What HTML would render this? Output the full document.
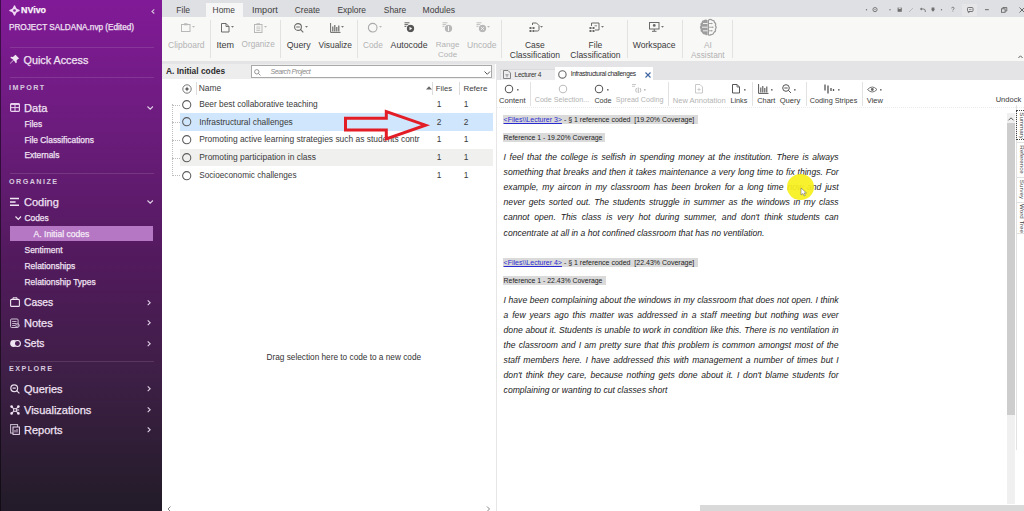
<!DOCTYPE html>
<html><head><meta charset="utf-8">
<style>
*{margin:0;padding:0;box-sizing:border-box}
html,body{width:1024px;height:511px;overflow:hidden;background:#fff;font-family:"Liberation Sans",sans-serif;color:#333}
.a{position:absolute;white-space:nowrap}
#sb{position:absolute;left:0;top:0;width:162px;height:511px;background:linear-gradient(180deg,#811a97 0px,#6b1c7c 130px,#531a5e 255px,#3d1f45 380px,#251c2b 495px,#241b2a 511px);color:#f1e8f3}
.hr{position:absolute;left:10px;width:144px;height:1px;background:rgba(255,255,255,0.12)}
.sbt{color:#f0e2f3;-webkit-text-stroke:0.25px #f0e2f3}
.cap{font-weight:bold;letter-spacing:1.45px;color:#d8cadf}
.dis{color:#b0b0b0}
.sep{position:absolute;width:1px;background:#dcdcdc}
.rl{color:#3a3a3a}
svg{position:absolute;overflow:visible}
</style></head><body>

<div id="sb">
<svg style="left:9px;top:4.7px" width="11" height="11" viewBox="0 0 11 11"><path d="M5.5 0.2 Q6.3 0.2 6.8 2.2 Q7.3 3.7 8.8 4.2 Q10.8 4.7 10.8 5.5 Q10.8 6.3 8.8 6.8 Q7.3 7.3 6.8 8.8 Q6.3 10.8 5.5 10.8 Q4.7 10.8 4.2 8.8 Q3.7 7.3 2.2 6.8 Q0.2 6.3 0.2 5.5 Q0.2 4.7 2.2 4.2 Q3.7 3.7 4.2 2.2 Q4.7 0.2 5.5 0.2Z" fill="#efd9f4"/><circle cx="5.5" cy="5.5" r="1.3" fill="#811a97"/></svg>
<div class="a sbt" style="left:21px;top:4.0px;font-size:8.9px;line-height:12px;font-weight:bold;color:#fff">NVivo</div>
<svg style="left:150.5px;top:8.5px" width="4" height="5"><path d="M3.3 0.3 L1 2.4 L3.3 4.5" stroke="#d9c4df" stroke-width="1.1" fill="none"/></svg>
<div class="a sbt" style="left:9px;top:21.5px;font-size:8.2px;line-height:11px;">PROJECT SALDANA.nvp (Edited)</div>
<div class="hr" style="top:47px"></div>
<svg style="left:9px;top:54px" width="11" height="11" viewBox="0 0 11 11"><path d="M6.5 0.8 L10.2 4.5 L9 5 L7.6 6.6 L7.8 8.6 L6.8 9.2 L4.8 6.2 L1.2 9.8 L0.8 9.4 L4.4 5.8 L1.4 3.8 L2 2.8 L4 3 L5.6 1.6 Z" fill="#f0e6f3"/></svg>
<div class="a sbt" style="left:23.5px;top:53.0px;font-size:10.8px;line-height:14px;">Quick Access</div>
<div class="hr" style="top:77px"></div>
<div class="a cap" style="left:9px;top:82.5px;font-size:7.2px;line-height:9px;">IMPORT</div>
<svg style="left:10px;top:103px" width="10" height="9" viewBox="0 0 10 9"><rect x="0.6" y="0.6" width="8.8" height="7.8" rx="1" stroke="#e9d3ee" stroke-width="1.2" fill="none"/><path d="M0.6 1.3 H9.4" stroke="#e9d3ee" stroke-width="1.3"/><path d="M0.6 4.6 H9.4 M5 1.5 V8.4" stroke="#e9d3ee" stroke-width="1"/></svg>
<div class="a sbt" style="left:24px;top:100.6px;font-size:11.1px;line-height:14px;">Data</div>
<svg style="left:147px;top:106px" width="6.5" height="4"><path d="M0.5 0.5 L3.2 3.2 L5.9 0.5" stroke="#e0d0e6" stroke-width="1.1" fill="none"/></svg>
<div class="a sbt" style="left:24.5px;top:118.5px;font-size:8.4px;line-height:11px;">Files</div>
<div class="a sbt" style="left:24.5px;top:134.5px;font-size:8.4px;line-height:11px;">File Classifications</div>
<div class="a sbt" style="left:24.5px;top:150.0px;font-size:8.4px;line-height:11px;">Externals</div>
<div class="hr" style="top:173px"></div>
<div class="a cap" style="left:9px;top:176.5px;font-size:7.2px;line-height:9px;">ORGANIZE</div>
<svg style="left:10px;top:197px" width="10" height="10" viewBox="0 0 10 10"><path d="M0 1.5 H9 M0 5 H5.6 M0 8.3 H9" stroke="#f0e6f3" stroke-width="1.4"/></svg>
<div class="a sbt" style="left:24px;top:195.0px;font-size:11.0px;line-height:14px;">Coding</div>
<svg style="left:147px;top:200px" width="6.5" height="4"><path d="M0.5 0.5 L3.2 3.2 L5.9 0.5" stroke="#e0d0e6" stroke-width="1.1" fill="none"/></svg>
<svg style="left:15px;top:216px" width="7" height="5"><path d="M0.5 0.5 L3.3 3.3 L6 0.5" stroke="#f0e6f3" stroke-width="1.2" fill="none"/></svg>
<div class="a sbt" style="left:24.5px;top:212.5px;font-size:8.4px;line-height:11px;">Codes</div>
<div style="position:absolute;left:10px;top:225.9px;width:142.8px;height:14.7px;background:#b577c3"></div>
<div class="a sbt" style="left:33.5px;top:228.5px;font-size:8.6px;line-height:11px;color:#fbf4fc">A. Initial codes</div>
<div class="a sbt" style="left:24.5px;top:244.5px;font-size:8.45px;line-height:11px;">Sentiment</div>
<div class="a sbt" style="left:24.5px;top:260.5px;font-size:8.45px;line-height:11px;">Relationships</div>
<div class="a sbt" style="left:24.5px;top:276.5px;font-size:8.45px;line-height:11px;">Relationship Types</div>
<svg style="left:10px;top:297px" width="10" height="10" viewBox="0 0 10 10"><rect x="0.6" y="2.4" width="8.8" height="7" rx="1" stroke="#f0e6f3" stroke-width="1.1" fill="none"/><path d="M3 2.4 V0.8 H7 V2.4" stroke="#f0e6f3" stroke-width="1" fill="none"/></svg>
<div class="a sbt" style="left:24px;top:296.1px;font-size:10.3px;line-height:13px;">Cases</div>
<svg style="left:10px;top:318px" width="10" height="10" viewBox="0 0 10 10"><rect x="0.6" y="1" width="7.5" height="8.5" rx="1" stroke="#cfc2d6" stroke-width="1" fill="none"/><path d="M2.2 3.5 H6.5 M2.2 5.5 H6.5 M2.2 7.5 H5" stroke="#cfc2d6" stroke-width="0.9"/><circle cx="7.5" cy="7.5" r="1.8" stroke="#cfc2d6" stroke-width="0.9" fill="none"/></svg>
<div class="a sbt" style="left:24px;top:316.0px;font-size:11.0px;line-height:14px;">Notes</div>
<svg style="left:9.5px;top:339px" width="11" height="9" viewBox="0 0 11 9"><circle cx="3.6" cy="4.5" r="3.4" fill="#f0e6f3"/><circle cx="7.4" cy="4.5" r="3" stroke="#f0e6f3" stroke-width="1.1" fill="#4b1c55"/></svg>
<div class="a sbt" style="left:24px;top:336.9px;font-size:10.2px;line-height:13px;">Sets</div>
<svg style="left:147px;top:299.8px" width="4.5" height="5.5"><path d="M0.7 0.4 L3.2 2.75 L0.7 5.1" stroke="#e0d0e6" stroke-width="1.05" fill="none"/></svg>
<svg style="left:147px;top:320.2px" width="4.5" height="5.5"><path d="M0.7 0.4 L3.2 2.75 L0.7 5.1" stroke="#e0d0e6" stroke-width="1.05" fill="none"/></svg>
<svg style="left:147px;top:340.59999999999997px" width="4.5" height="5.5"><path d="M0.7 0.4 L3.2 2.75 L0.7 5.1" stroke="#e0d0e6" stroke-width="1.05" fill="none"/></svg>
<svg style="left:147px;top:386.4px" width="4.5" height="5.5"><path d="M0.7 0.4 L3.2 2.75 L0.7 5.1" stroke="#e0d0e6" stroke-width="1.05" fill="none"/></svg>
<svg style="left:147px;top:406.7px" width="4.5" height="5.5"><path d="M0.7 0.4 L3.2 2.75 L0.7 5.1" stroke="#e0d0e6" stroke-width="1.05" fill="none"/></svg>
<svg style="left:147px;top:426.9px" width="4.5" height="5.5"><path d="M0.7 0.4 L3.2 2.75 L0.7 5.1" stroke="#e0d0e6" stroke-width="1.05" fill="none"/></svg>
<div class="hr" style="top:361px"></div>
<div class="a cap" style="left:9px;top:364.0px;font-size:7.2px;line-height:9px;">EXPLORE</div>
<svg style="left:10px;top:384px" width="10" height="10" viewBox="0 0 10 10"><circle cx="4.2" cy="4.2" r="3.4" stroke="#e6dbe9" stroke-width="1.2" fill="none"/><path d="M6.6 6.6 L9.4 9.4 M2.6 4.2 H5.8" stroke="#e6dbe9" stroke-width="1.2"/></svg>
<div class="a sbt" style="left:24px;top:382.2px;font-size:11.0px;line-height:14px;">Queries</div>
<svg style="left:10px;top:405px" width="10" height="10" viewBox="0 0 10 10"><path d="M1.6 1.6 L3.8 3.8 M8.4 1.6 L6.2 3.8 M1.6 8.4 L3.8 6.2 M8.4 8.4 L6.2 6.2 M6.4 5 H9.2" stroke="#efe3f3" stroke-width="1.1"/><circle cx="1.6" cy="1.6" r="1.3" fill="#efe3f3"/><circle cx="8.4" cy="1.6" r="1.3" fill="#efe3f3"/><circle cx="1.6" cy="8.4" r="1.3" fill="#efe3f3"/><circle cx="8.4" cy="8.4" r="1.3" fill="#efe3f3"/><circle cx="5" cy="5" r="1.5" stroke="#efe3f3" stroke-width="1" fill="none"/></svg>
<div class="a sbt" style="left:24px;top:402.5px;font-size:11.05px;line-height:14px;">Visualizations</div>
<svg style="left:10px;top:424px" width="10" height="11" viewBox="0 0 10 11"><rect x="0.6" y="0.6" width="7" height="8.5" stroke="#cfc2d6" stroke-width="1" fill="none"/><rect x="3" y="3" width="6.4" height="7.4" stroke="#e6dbe9" stroke-width="1" fill="#3a1e42"/><path d="M5 6 V8.5 M7 5 V8.5" stroke="#e6dbe9" stroke-width="0.9"/></svg>
<div class="a sbt" style="left:24px;top:422.7px;font-size:11.0px;line-height:14px;">Reports</div>
<div style="position:absolute;left:0;top:0;width:1px;height:511px;background:rgba(0,0,0,0.5)"></div>
</div>
<div style="position:absolute;left:162px;top:0;width:862px;height:17px;background:#dfe0e3"></div>
<div style="position:absolute;left:205.5px;top:3px;width:37.5px;height:14px;background:#f6f6f6"></div>
<div class="a " style="left:176.3px;top:4.5px;font-size:8.5px;line-height:11px;color:#3e3e3e">File</div>
<div class="a " style="left:212.6px;top:4.5px;font-size:8.4px;line-height:11px;color:#3e3e3e">Home</div>
<div class="a " style="left:252px;top:4.0px;font-size:9.1px;line-height:12px;color:#3e3e3e">Import</div>
<div class="a " style="left:294.8px;top:4.5px;font-size:8.4px;line-height:11px;color:#3e3e3e">Create</div>
<div class="a " style="left:337.4px;top:4.5px;font-size:8.44px;line-height:11px;color:#3e3e3e">Explore</div>
<div class="a " style="left:383.8px;top:4.5px;font-size:8.4px;line-height:11px;color:#3e3e3e">Share</div>
<div class="a " style="left:422.5px;top:4.5px;font-size:8.6px;line-height:11px;color:#3e3e3e">Modules</div>
<svg style="left:864px;top:7px" width="160" height="7"><circle cx="2.5" cy="2.8" r="0.7" fill="#707070"/><circle cx="11" cy="2.6" r="2.1" stroke="#707070" stroke-width="0.9" fill="none"/><circle cx="11" cy="2.6" r="0.7" fill="#707070"/><circle cx="26" cy="2.8" r="0.7" fill="#707070"/><rect x="33.6" y="0.6" width="4.2" height="4.2" fill="#707070"/><rect x="34.6" y="0.6" width="2.2" height="1.3" fill="#dfe0e3"/><path d="M45 5 L49 1" stroke="#b0b0b0" stroke-width="0.8"/><path d="M57 2 H59.5 Q61.3 2 61.3 4 V5" stroke="#707070" stroke-width="0.9" fill="none"/><path d="M55.8 2 L57.8 0.4 V3.6Z" fill="#707070"/><path d="M67.6 0.6 H70.4 V2.5 H67.6Z M67 2.5 H71 L69 4.8Z" fill="#707070"/><circle cx="77.5" cy="2.8" r="0.7" fill="#707070"/><path d="M87.6 1.3 Q87.6 0.2 88.9 0.2 Q90.1 0.2 90.1 1.3 Q90.1 2.2 88.9 2.7 V3.4" stroke="#707070" stroke-width="0.8" fill="none"/><circle cx="88.9" cy="4.6" r="0.45" fill="#707070"/></svg>
<div style="position:absolute;left:961.7px;top:3.7px;width:15.5px;height:12.5px;background:#e6e6e8"></div>
<svg style="left:966.8px;top:6.5px" width="7" height="6"><rect x="0.5" y="0.5" width="5.5" height="4" rx="0.8" stroke="#666" stroke-width="0.9" fill="none"/><path d="M1.5 4.5 L1.3 5.8 L3 4.5" stroke="#666" stroke-width="0.7" fill="none"/><path d="M2 2.5 H4.5" stroke="#666" stroke-width="0.6"/></svg>
<svg style="left:985px;top:9px" width="4" height="1.5"><path d="M0 0.7 H3.8" stroke="#6a6a6a" stroke-width="1"/></svg>
<svg style="left:1001px;top:6.8px" width="6.5" height="5.8"><rect x="0.5" y="1.8" width="3.6" height="3.5" stroke="#6a6a6a" stroke-width="0.9" fill="none"/><path d="M1.8 1.8 V0.5 H5.8 V4 H4.1" stroke="#6a6a6a" stroke-width="0.9" fill="none"/></svg>
<svg style="left:1018.5px;top:6.8px" width="6" height="6"><path d="M0.5 0.5 L5.5 5.5 M5.5 0.5 L0.5 5.5" stroke="#6a6a6a" stroke-width="1"/></svg>
<div style="position:absolute;left:162px;top:17px;width:862px;height:44px;background:#f8f8f7"></div>
<div class="sep" style="left:209.8px;top:20px;height:38px;background:#e2e2e2"></div>
<div class="sep" style="left:280.3px;top:20px;height:38px;background:#e2e2e2"></div>
<div class="sep" style="left:356.5px;top:20px;height:38px;background:#e2e2e2"></div>
<div class="sep" style="left:501.2px;top:20px;height:38px;background:#e2e2e2"></div>
<div class="sep" style="left:626.8px;top:20px;height:38px;background:#e2e2e2"></div>
<div class="sep" style="left:682.3px;top:20px;height:38px;background:#e2e2e2"></div>
<div class="sep" style="left:731.6px;top:20px;height:38px;background:#e2e2e2"></div>
<div class="a" style="left:148px;width:76.6px;text-align:center;top:38.5px;font-size:8.55px;line-height:12px;color:#b3b3b3">Clipboard</div>
<div class="a" style="left:196.4px;width:57.599999999999994px;text-align:center;top:38.5px;font-size:9.0px;line-height:12px;color:#3b3b3b">Item</div>
<div class="a" style="left:221.5px;width:73.30000000000001px;text-align:center;top:38.5px;font-size:8.2px;line-height:12px;color:#b3b3b3">Organize</div>
<div class="a" style="left:266.7px;width:63.900000000000034px;text-align:center;top:38.5px;font-size:8.8px;line-height:12px;color:#3b3b3b">Query</div>
<div class="a" style="left:298.5px;width:73.39999999999998px;text-align:center;top:38.5px;font-size:8.4px;line-height:12px;color:#3b3b3b">Visualize</div>
<div class="a" style="left:343px;width:59.80000000000001px;text-align:center;top:38.5px;font-size:8.3px;line-height:12px;color:#b3b3b3">Code</div>
<div class="a" style="left:370.6px;width:77.0px;text-align:center;top:38.5px;font-size:8.76px;line-height:12px;color:#3b3b3b">Autocode</div>
<div class="a" style="left:416.3px;width:62.69999999999999px;text-align:center;top:38.5px;font-size:8.0px;line-height:12px;color:#b3b3b3">Range</div>
<div class="a" style="left:416.3px;width:62.69999999999999px;text-align:center;top:48.5px;font-size:8.0px;line-height:12px;color:#b3b3b3">Code</div>
<div class="a" style="left:447px;width:69.5px;text-align:center;top:38.5px;font-size:8.56px;line-height:12px;color:#b3b3b3">Uncode</div>
<div class="a" style="left:489.8px;width:90.19999999999999px;text-align:center;top:38.5px;font-size:8.5px;line-height:12px;color:#3b3b3b">Case</div>
<div class="a" style="left:489.8px;width:90.19999999999999px;text-align:center;top:48.5px;font-size:8.52px;line-height:12px;color:#3b3b3b">Classification</div>
<div class="a" style="left:550.4px;width:90.10000000000002px;text-align:center;top:38.5px;font-size:8.5px;line-height:12px;color:#3b3b3b">File</div>
<div class="a" style="left:550.4px;width:90.10000000000002px;text-align:center;top:48.5px;font-size:8.52px;line-height:12px;color:#3b3b3b">Classification</div>
<div class="a" style="left:612px;width:84.29999999999995px;text-align:center;top:38.5px;font-size:8.6px;line-height:12px;color:#3b3b3b">Workspace</div>
<div class="a" style="left:671px;width:73.70000000000005px;text-align:center;top:38.5px;font-size:8.3px;line-height:12px;color:#b3b3b3">AI</div>
<div class="a" style="left:671px;width:73.70000000000005px;text-align:center;top:48.5px;font-size:8.3px;line-height:12px;color:#b3b3b3">Assistant</div>
<svg style="left:181px;top:22.5px" width="10" height="9"><rect x="0.5" y="1.5" width="8.5" height="7" stroke="#b8b8b8" stroke-width="1" fill="none"/><rect x="3" y="0.3" width="3.5" height="2" fill="#b8b8b8"/></svg>
<svg style="left:191.5px;top:25.5px" width="3" height="2"><path d="M0 0 H3 L1.5 1.8Z" fill="#b8b8b8"/></svg>
<svg style="left:220.5px;top:22.5px" width="9" height="10"><path d="M0.5 0.5 H5 L8 3.5 V9 H0.5Z" stroke="#6a6a6a" stroke-width="1" fill="none"/><path d="M5 0.5 V3.5 H8" stroke="#6a6a6a" stroke-width="0.9" fill="none"/></svg>
<svg style="left:231.2px;top:25.5px" width="3" height="2"><path d="M0 0 H3 L1.5 1.8Z" fill="#777"/></svg>
<svg style="left:254px;top:22.5px" width="9" height="10"><rect x="0.5" y="1.5" width="7.5" height="8" stroke="#b8b8b8" stroke-width="1" fill="none"/><path d="M2.3 4 H6.3 M2.3 5.8 H6.3 M2.3 7.6 H6.3" stroke="#b8b8b8" stroke-width="0.8"/><rect x="2.5" y="0.3" width="3.5" height="1.8" fill="#b8b8b8"/></svg>
<svg style="left:264.0px;top:25.5px" width="3" height="2"><path d="M0 0 H3 L1.5 1.8Z" fill="#b8b8b8"/></svg>
<svg style="left:293.5px;top:22.5px" width="10" height="10"><circle cx="4" cy="4" r="3.4" stroke="#6a6a6a" stroke-width="1.1" fill="none"/><path d="M6.4 6.4 L9.3 9.3 M2.2 4 H5.8" stroke="#6a6a6a" stroke-width="1.1"/></svg>
<svg style="left:305.0px;top:25.5px" width="3" height="2"><path d="M0 0 H3 L1.5 1.8Z" fill="#777"/></svg>
<svg style="left:329.5px;top:22.5px" width="11" height="10"><path d="M0.6 0 V9.4 H10.5" stroke="#6a6a6a" stroke-width="1" fill="none"/><path d="M2.8 3.5 V8.5 M4.8 2 V8.5 M6.8 4 V8.5 M8.8 2.5 V8.5" stroke="#6a6a6a" stroke-width="1.2"/></svg>
<svg style="left:341.2px;top:25.5px" width="3" height="2"><path d="M0 0 H3 L1.5 1.8Z" fill="#777"/></svg>
<svg style="left:367.5px;top:22.5px" width="10" height="10"><circle cx="4.7" cy="4.7" r="4.3" stroke="#aaa" stroke-width="1.1" fill="none"/></svg>
<svg style="left:379.0px;top:25.5px" width="3" height="2"><path d="M0 0 H3 L1.5 1.8Z" fill="#b8b8b8"/></svg>
<svg style="left:404px;top:21.5px" width="11" height="11"><path d="M0.5 0.8 H5.5 M0.5 2.6 H4.5 M0.5 4.4 H3" stroke="#555" stroke-width="0.9"/><circle cx="6.5" cy="6.5" r="3.7" fill="#555"/><circle cx="6.5" cy="6.5" r="4.4" fill="none" stroke="#f8f8f7" stroke-width="0.8"/><path d="M5.5 4.7 L8.2 6.5 L5.5 8.3Z" fill="#f8f8f7"/></svg>
<svg style="left:442px;top:21.5px" width="11" height="11"><path d="M0.5 0.8 H5.5 M0.5 2.6 H4.5 M0.5 4.4 H3" stroke="#b8b8b8" stroke-width="0.9"/><circle cx="6.5" cy="6.5" r="3.7" fill="#b8b8b8"/><circle cx="6.5" cy="6.5" r="4.4" fill="none" stroke="#f8f8f7" stroke-width="0.8"/><rect x="6" y="4" width="1" height="5" fill="#f8f8f7"/></svg>
<svg style="left:476px;top:21.5px" width="11" height="11"><path d="M0.5 0.8 H5.5 M0.5 2.6 H4.5 M0.5 4.4 H3" stroke="#b8b8b8" stroke-width="0.9"/><circle cx="6.5" cy="6.5" r="3.7" fill="#b8b8b8"/><circle cx="6.5" cy="6.5" r="4.4" fill="none" stroke="#f8f8f7" stroke-width="0.8"/><path d="M5.2 5.2 L7.8 7.8 M7.8 5.2 L5.2 7.8" stroke="#f8f8f7" stroke-width="0.9"/></svg>
<svg style="left:487.1px;top:25.5px" width="3" height="2"><path d="M0 0 H3 L1.5 1.8Z" fill="#b8b8b8"/></svg>
<svg style="left:528.5px;top:21.5px" width="11" height="11"><path d="M3.5 3 V1 H7.5 L10 3.5 V7.5 Q10 9 8.5 9 H6" stroke="#6a6a6a" stroke-width="1" fill="none"/><rect x="0.5" y="5" width="2" height="2" fill="#6a6a6a"/><rect x="3.5" y="5" width="2" height="2" fill="#6a6a6a"/><rect x="0.5" y="8" width="2" height="2" fill="#6a6a6a"/><rect x="3.5" y="8" width="2" height="2" fill="#6a6a6a"/></svg>
<svg style="left:539.8px;top:25.5px" width="3" height="2"><path d="M0 0 H3 L1.5 1.8Z" fill="#777"/></svg>
<svg style="left:589px;top:21.5px" width="11" height="11"><path d="M2.5 4 V1 H10 V8 H6" stroke="#6a6a6a" stroke-width="1" fill="none"/><path d="M5.5 3.8 H8" stroke="#6a6a6a" stroke-width="0.8"/><rect x="0.5" y="5" width="2" height="2" fill="#6a6a6a"/><rect x="3.5" y="5" width="2" height="2" fill="#6a6a6a"/><rect x="0.5" y="8" width="2" height="2" fill="#6a6a6a"/><rect x="3.5" y="8" width="2" height="2" fill="#6a6a6a"/></svg>
<svg style="left:600.9px;top:25.5px" width="3" height="2"><path d="M0 0 H3 L1.5 1.8Z" fill="#777"/></svg>
<svg style="left:649px;top:22px" width="11" height="10"><rect x="0.5" y="0.5" width="9.5" height="6.5" stroke="#6a6a6a" stroke-width="1" fill="none"/><path d="M3 9.3 H7.5 M5.25 7 V9" stroke="#6a6a6a" stroke-width="1"/><circle cx="5.25" cy="3.4" r="1.4" fill="#6a6a6a"/></svg>
<svg style="left:660.7px;top:25.5px" width="3" height="2"><path d="M0 0 H3 L1.5 1.8Z" fill="#777"/></svg>
<svg style="left:699px;top:18.5px" width="18" height="17" viewBox="0 0 18 17"><path d="M8.6 1.2 Q6.5 -0.3 4.8 1.3 Q2.6 1.2 2.6 3.4 Q0.6 4.4 1.6 6.6 Q0 8.4 1.6 10.2 Q0.9 12.6 3 13.4 Q3.6 15.8 6 15.5 Q7.4 16.8 8.6 15.7Z" fill="#9d9d9d"/><path d="M9.4 1.2 Q11.5 -0.3 13.2 1.3 Q15.4 1.2 15.4 3.4 Q17.4 4.4 16.4 6.6 Q18 8.4 16.4 10.2 Q17.1 12.6 15 13.4 Q14.4 15.8 12 15.5 Q10.6 16.8 9.4 15.7Z" stroke="#9d9d9d" stroke-width="1.2" fill="#f8f8f7"/><path d="M4 4.5 H8.6 M3 8.2 H8.6 M4 11.8 H8.6" stroke="#f8f8f7" stroke-width="0.9"/><path d="M9.4 4.5 H12.5 M9.4 8.2 H13.5 M9.4 11.8 H12.5" stroke="#9d9d9d" stroke-width="0.9"/><circle cx="12.8" cy="4.5" r="0.8" fill="#9d9d9d"/><circle cx="13.8" cy="8.2" r="0.8" fill="#9d9d9d"/><circle cx="12.8" cy="11.8" r="0.8" fill="#9d9d9d"/></svg>
<svg style="left:1017.5px;top:54.8px" width="5" height="3.5"><path d="M0.4 3 L2.5 0.8 L4.6 3" stroke="#555" stroke-width="0.9" fill="none"/></svg>
<div style="position:absolute;left:162px;top:61px;width:862px;height:3px;background:#e4e4e6"></div>
<div style="position:absolute;left:162px;top:64px;width:333px;height:15px;background:#ededee"></div>
<div class="a " style="left:166px;top:65.5px;font-size:8.4px;line-height:11px;font-weight:bold;color:#2e2e2e">A. Initial codes</div>
<div style="position:absolute;left:251.3px;top:65.4px;width:240.5px;height:12.8px;background:#fff;border:1px solid #a9a9a9"></div>
<svg style="left:254px;top:68.5px" width="7" height="7"><circle cx="2.8" cy="2.8" r="2.2" stroke="#8a8a8a" stroke-width="0.9" fill="none"/><path d="M4.4 4.4 L6.5 6.5" stroke="#8a8a8a" stroke-width="0.9"/></svg>
<div class="a " style="left:270.6px;top:67.3px;font-size:7.0px;line-height:9px;font-style:italic;color:#8a8a8a;letter-spacing:-0.45px">Search Project</div>
<svg style="left:483.5px;top:70.5px" width="7" height="4"><path d="M0.5 0.5 L3.3 3.3 L6 0.5" stroke="#555" stroke-width="1" fill="none"/></svg>
<div style="position:absolute;left:163.3px;top:79px;width:331px;height:432px;background:#fff"></div>
<svg style="left:182px;top:83.5px" width="10" height="10"><circle cx="5" cy="5" r="4.2" stroke="#777" stroke-width="1" fill="none"/><path d="M5 2.6 L5.8 4.2 L7.4 5 L5.8 5.8 L5 7.4 L4.2 5.8 L2.6 5 L4.2 4.2Z" fill="#555"/></svg>
<div class="sep" style="left:195.6px;top:82px;height:13px;background:#dcdcdc"></div>
<div class="sep" style="left:432.3px;top:82px;height:13px;background:#dcdcdc"></div>
<div class="sep" style="left:459.3px;top:82px;height:13px;background:#dcdcdc"></div>
<div class="a " style="left:198.7px;top:83.0px;font-size:8.45px;line-height:11px;color:#404040">Name</div>
<svg style="left:426px;top:85.5px" width="6" height="4"><path d="M0 3.5 L3 0.3 L6 3.5Z" fill="#666"/></svg>
<div class="a " style="left:435.8px;top:83.5px;font-size:7.7px;line-height:10px;color:#404040">Files</div>
<div class="a " style="left:463.4px;top:83.5px;font-size:8.0px;line-height:10px;color:#404040">Refere</div>
<div style="position:absolute;left:180.3px;top:113.1px;width:313px;height:17.7px;background:#d0e6fc"></div>
<div style="position:absolute;left:180.3px;top:149px;width:313px;height:17.3px;background:#f0f0ef"></div>
<div style="position:absolute;left:171.5px;top:103.5px;width:0;height:72px;border-left:1px dotted #bdbdbd"></div>
<div style="position:absolute;left:172px;top:104.5px;width:8px;height:0;border-top:1px dotted #bdbdbd"></div>
<svg style="left:181.8px;top:99.8px" width="10" height="10"><circle cx="4.7" cy="4.7" r="4.1" stroke="#5c5c5c" stroke-width="1.05" fill="none"/></svg>
<div class="a " style="left:199.2px;top:99.0px;font-size:8.33px;line-height:11px;color:#3a3a3a">Beer best collaborative teaching</div>
<div class="a " style="left:436.7px;top:99.0px;font-size:8.4px;line-height:11px;color:#3a3a3a">1</div>
<div class="a " style="left:463.7px;top:99.0px;font-size:8.4px;line-height:11px;color:#3a3a3a">1</div>
<div style="position:absolute;left:172px;top:122px;width:8px;height:0;border-top:1px dotted #bdbdbd"></div>
<svg style="left:181.8px;top:117.3px" width="10" height="10"><circle cx="4.7" cy="4.7" r="4.1" stroke="#5c5c5c" stroke-width="1.05" fill="none"/></svg>
<div class="a " style="left:199.2px;top:116.5px;font-size:8.39px;line-height:11px;color:#3a3a3a">Infrastructural challenges</div>
<div class="a " style="left:436.7px;top:116.5px;font-size:8.4px;line-height:11px;color:#3a3a3a">2</div>
<div class="a " style="left:463.7px;top:116.5px;font-size:8.4px;line-height:11px;color:#3a3a3a">2</div>
<div style="position:absolute;left:172px;top:139.8px;width:8px;height:0;border-top:1px dotted #bdbdbd"></div>
<svg style="left:181.8px;top:135.10000000000002px" width="10" height="10"><circle cx="4.7" cy="4.7" r="4.1" stroke="#5c5c5c" stroke-width="1.05" fill="none"/></svg>
<div class="a " style="left:199.2px;top:134.3px;font-size:8.43px;line-height:11px;color:#3a3a3a">Promoting active learning strategies such as students contr</div>
<div class="a " style="left:436.7px;top:134.3px;font-size:8.4px;line-height:11px;color:#3a3a3a">1</div>
<div class="a " style="left:463.7px;top:134.3px;font-size:8.4px;line-height:11px;color:#3a3a3a">1</div>
<div style="position:absolute;left:172px;top:157.6px;width:8px;height:0;border-top:1px dotted #bdbdbd"></div>
<svg style="left:181.8px;top:152.9px" width="10" height="10"><circle cx="4.7" cy="4.7" r="4.1" stroke="#5c5c5c" stroke-width="1.05" fill="none"/></svg>
<div class="a " style="left:199.2px;top:152.1px;font-size:8.45px;line-height:11px;color:#3a3a3a">Promoting participation in class</div>
<div class="a " style="left:436.7px;top:152.1px;font-size:8.4px;line-height:11px;color:#3a3a3a">1</div>
<div class="a " style="left:463.7px;top:152.1px;font-size:8.4px;line-height:11px;color:#3a3a3a">1</div>
<div style="position:absolute;left:172px;top:175.3px;width:8px;height:0;border-top:1px dotted #bdbdbd"></div>
<svg style="left:181.8px;top:170.60000000000002px" width="10" height="10"><circle cx="4.7" cy="4.7" r="4.1" stroke="#5c5c5c" stroke-width="1.05" fill="none"/></svg>
<div class="a " style="left:199.2px;top:169.8px;font-size:8.22px;line-height:11px;color:#3a3a3a">Socioeconomic challenges</div>
<div class="a " style="left:436.7px;top:169.8px;font-size:8.4px;line-height:11px;color:#3a3a3a">1</div>
<div class="a " style="left:463.7px;top:169.8px;font-size:8.4px;line-height:11px;color:#3a3a3a">1</div>
<div class="a " style="left:266.5px;top:351.9px;font-size:8.25px;line-height:11px;color:#333">Drag selection here to code to a new code</div>
<svg style="left:167px;top:506px" width="5" height="5"><path d="M3.5 0.5 L1 3 L3.5 5.5" stroke="#777" stroke-width="0.9" fill="none"/></svg>
<svg style="left:486px;top:506px" width="5" height="5"><path d="M1 0.5 L3.5 3 L1 5.5" stroke="#777" stroke-width="0.9" fill="none"/></svg>
<div style="position:absolute;left:495.5px;top:64px;width:1.5px;height:447px;background:#e6e6e6"></div>
<svg style="left:0;top:0" width="1024" height="511"><path d="M345.5 118.3 H386.3 V111.6 L425.5 125.2 L386.3 138.9 V130 H345.5Z" stroke="#e31d26" stroke-width="3" fill="none" stroke-linejoin="miter"/></svg>
<div style="position:absolute;left:497px;top:64px;width:527px;height:16.3px;background:#e4e4e6"></div>
<div style="position:absolute;left:499.5px;top:68.7px;width:56px;height:11.6px;background:#ececee;border:1px solid #dadada;border-bottom:none"></div>
<svg style="left:503px;top:70px" width="8" height="9"><path d="M0.5 0.5 H5 L7.5 3 V8.5 H0.5Z" stroke="#777" stroke-width="0.9" fill="none"/><path d="M2.3 4.8 H5.7 M4 4.8 V7.3" stroke="#777" stroke-width="0.7"/></svg>
<div class="a " style="left:514.6px;top:69.7px;font-size:6.6px;line-height:9px;color:#333;letter-spacing:-0.33px">Lecturer 4</div>
<div style="position:absolute;left:555.4px;top:67px;width:97.6px;height:13.3px;background:#fff"></div>
<svg style="left:558px;top:69.5px" width="9" height="9"><circle cx="4.4" cy="4.4" r="3.7" stroke="#6a6a6a" stroke-width="1.1" fill="none"/></svg>
<div class="a " style="left:570.7px;top:69.3px;font-size:6.6px;line-height:9px;color:#2a2a2a;letter-spacing:-0.33px">Infrastructural challenges</div>
<svg style="left:644.5px;top:71.8px" width="6" height="6"><path d="M0.5 0.5 L5.5 5.5 M5.5 0.5 L0.5 5.5" stroke="#3d64a0" stroke-width="1.1"/></svg>
<div style="position:absolute;left:497px;top:80.3px;width:527px;height:27.5px;background:#fff;border-bottom:1px dotted #ebebeb"></div>
<div class="sep" style="left:530px;top:82px;height:24px;background:#e2e2e2"></div>
<div class="sep" style="left:667.5px;top:82px;height:24px;background:#e2e2e2"></div>
<div class="sep" style="left:752px;top:82px;height:24px;background:#e2e2e2"></div>
<div class="sep" style="left:805.5px;top:82px;height:24px;background:#e2e2e2"></div>
<div class="sep" style="left:862.3px;top:82px;height:24px;background:#e2e2e2"></div>
<div class="a" style="left:479px;width:66.60000000000002px;text-align:center;top:94.9px;font-size:7.6px;line-height:11px;color:#3b3b3b">Content</div>
<div class="a" style="left:514.7px;width:94.59999999999991px;text-align:center;top:94.9px;font-size:7.17px;line-height:11px;color:#b3b3b3">Code Selection...</div>
<div class="a" style="left:574.5px;width:57.0px;text-align:center;top:94.9px;font-size:7.2px;line-height:11px;color:#3b3b3b">Code</div>
<div class="a" style="left:595.8px;width:87.70000000000005px;text-align:center;top:94.9px;font-size:7.15px;line-height:11px;color:#b3b3b3">Spread Coding</div>
<div class="a" style="left:652.5px;width:93.5px;text-align:center;top:94.9px;font-size:7.58px;line-height:11px;color:#b3b3b3">New Annotation</div>
<div class="a" style="left:710.5px;width:56.799999999999955px;text-align:center;top:94.9px;font-size:7.2px;line-height:11px;color:#3b3b3b">Links</div>
<div class="a" style="left:737.3px;width:58.0px;text-align:center;top:94.9px;font-size:7.36px;line-height:11px;color:#3b3b3b">Chart</div>
<div class="a" style="left:759.6px;width:60.799999999999955px;text-align:center;top:94.9px;font-size:7.6px;line-height:11px;color:#3b3b3b">Query</div>
<div class="a" style="left:789.7px;width:87.59999999999991px;text-align:center;top:94.9px;font-size:7.26px;line-height:11px;color:#3b3b3b">Coding Stripes</div>
<div class="a" style="left:846.8px;width:56.200000000000045px;text-align:center;top:94.9px;font-size:7.54px;line-height:11px;color:#3b3b3b">View</div>
<div class="a " style="left:995.7px;top:95.3px;font-size:7.52px;line-height:10px;color:#3b3b3b">Undock</div>
<svg style="left:504.3px;top:83.9px" width="10" height="10"><circle cx="5" cy="5" r="3.7" stroke="#555" stroke-width="1.05" fill="none"/></svg>
<svg style="left:516.9px;top:88.5px" width="2" height="2"><rect width="1.6" height="1.6" fill="#777"/></svg>
<svg style="left:557.9px;top:83.9px" width="10" height="10"><circle cx="5" cy="5" r="3.7" stroke="#bdbdbd" stroke-width="1.05" fill="none"/></svg>
<svg style="left:594.4px;top:83.9px" width="10" height="10"><circle cx="5" cy="5" r="3.7" stroke="#555" stroke-width="1.05" fill="none"/></svg>
<svg style="left:606.7px;top:88.5px" width="2" height="2"><rect width="1.6" height="1.6" fill="#777"/></svg>
<svg style="left:632px;top:84px" width="11" height="10"><path d="M0 0.5 H4 M0 2.3 H3" stroke="#bbb" stroke-width="0.8"/><path d="M4.5 4 Q2.8 6.2 4.5 8.4 M8 4 Q9.7 6.2 8 8.4 M6.25 3.5 V9" stroke="#bbb" stroke-width="1" fill="none"/></svg>
<svg style="left:644.2px;top:88.5px" width="2" height="2"><rect width="1.6" height="1.6" fill="#bbb"/></svg>
<svg style="left:695px;top:84px" width="9" height="10"><path d="M0.5 0.5 H5 L7.5 3 V9 H0.5Z" stroke="#c4c4c4" stroke-width="0.9" fill="none"/><path d="M2.3 5.5 H5.7 M4 3.8 V7.2" stroke="#c4c4c4" stroke-width="0.8"/></svg>
<svg style="left:732px;top:84px" width="9" height="10"><path d="M0.5 0.5 H5 L7.5 3 V9 H0.5Z" stroke="#555" stroke-width="1" fill="none"/><path d="M5 0.5 V3 H7.5" stroke="#555" stroke-width="0.8" fill="none"/></svg>
<svg style="left:743.6px;top:88.5px" width="2" height="2"><rect width="1.6" height="1.6" fill="#777"/></svg>
<svg style="left:758px;top:84px" width="11" height="10"><path d="M0.6 0 V9.4 H10.5" stroke="#555" stroke-width="1" fill="none"/><path d="M2.8 3.5 V8.5 M4.8 2 V8.5 M6.8 4 V8.5 M8.8 2.5 V8.5" stroke="#555" stroke-width="1.1"/></svg>
<svg style="left:771px;top:88.5px" width="2" height="2"><rect width="1.6" height="1.6" fill="#777"/></svg>
<svg style="left:782px;top:84px" width="10" height="10"><circle cx="4" cy="4" r="3.3" stroke="#555" stroke-width="1" fill="none"/><path d="M6.3 6.3 L9 9 M2.3 4 H5.7" stroke="#555" stroke-width="1"/></svg>
<svg style="left:794.4px;top:88.5px" width="2" height="2"><rect width="1.6" height="1.6" fill="#777"/></svg>
<svg style="left:824px;top:84px" width="11" height="10"><path d="M1 0.5 V6.5 M4 1.5 V9.5 M7 4 V7 M9.5 5 V7" stroke="#555" stroke-width="1.3"/></svg>
<svg style="left:837.8px;top:88.5px" width="2" height="2"><rect width="1.6" height="1.6" fill="#777"/></svg>
<svg style="left:866.5px;top:85.5px" width="11" height="7"><path d="M0.5 3.5 Q5.3 -1.5 10 3.5 Q5.3 8.5 0.5 3.5Z" stroke="#666" stroke-width="0.9" fill="none"/><circle cx="5.3" cy="3.5" r="1.4" fill="#666"/></svg>
<svg style="left:879.5px;top:88.5px" width="2" height="2"><rect width="1.6" height="1.6" fill="#777"/></svg>
<div style="position:absolute;left:503.3px;top:114.9px;width:194.99999999999994px;height:9px;background:#dadada"></div>
<div class="a " style="left:503.6px;top:114.9px;font-size:7.0px;line-height:9px;color:#222"><span style="color:#2a2ad0;text-decoration:underline">&lt;Files\\Lecturer 3&gt;</span> - § 1 reference coded &nbsp;[19.20% Coverage]</div>
<div style="position:absolute;left:503.3px;top:133.3px;width:102.19999999999999px;height:9px;background:#dadada"></div>
<div class="a " style="left:503.6px;top:133.3px;font-size:6.9px;line-height:9px;color:#222">Reference 1 - 19.20% Coverage</div>
<div style="position:absolute;left:503.3px;top:257.5px;width:195.09999999999997px;height:9px;background:#dadada"></div>
<div class="a " style="left:503.6px;top:257.5px;font-size:7.0px;line-height:9px;color:#222"><span style="color:#2a2ad0;text-decoration:underline">&lt;Files\\Lecturer 4&gt;</span> - § 1 reference coded &nbsp;[22.43% Coverage]</div>
<div style="position:absolute;left:503.3px;top:276.1px;width:102.69999999999999px;height:9px;background:#dadada"></div>
<div class="a " style="left:503.6px;top:276.1px;font-size:6.9px;line-height:9px;color:#222">Reference 1 - 22.43% Coverage</div>
<div style="position:absolute;left:503.6px;width:335px;top:150.7px;font-size:8.6px;line-height:12px;font-style:italic;color:#222;white-space:nowrap;text-align:justify;text-align-last:justify">I feel that the college is selfish in spending money at the institution. There is always</div>
<div style="position:absolute;left:503.6px;width:335px;top:165.9px;font-size:8.6px;line-height:12px;font-style:italic;color:#222;white-space:nowrap;text-align:justify;text-align-last:justify">something that breaks and then it takes maintenance a very long time to fix things. For</div>
<div style="position:absolute;left:503.6px;width:335px;top:181px;font-size:8.6px;line-height:12px;font-style:italic;color:#222;white-space:nowrap;text-align:justify;text-align-last:justify">example, my aircon in my classroom has been broken for a long time now and just</div>
<div style="position:absolute;left:503.6px;width:335px;top:196.2px;font-size:8.6px;line-height:12px;font-style:italic;color:#222;white-space:nowrap;text-align:justify;text-align-last:justify">never gets sorted out. The students struggle in summer as the windows in my class</div>
<div style="position:absolute;left:503.6px;width:335px;top:211.3px;font-size:8.6px;line-height:12px;font-style:italic;color:#222;white-space:nowrap;text-align:justify;text-align-last:justify">cannot open. This class is very hot during summer, and don't think students can</div>
<div style="position:absolute;left:503.6px;width:335px;top:226.5px;font-size:8.6px;line-height:12px;font-style:italic;color:#222;white-space:nowrap;text-align:left">concentrate at all in a hot confined classroom that has no ventilation.</div>
<div style="position:absolute;left:503.6px;width:335px;top:293.8px;font-size:8.6px;line-height:12px;font-style:italic;color:#222;white-space:nowrap;text-align:justify;text-align-last:justify">I have been complaining about the windows in my classroom that does not open. I think</div>
<div style="position:absolute;left:503.6px;width:335px;top:308.8px;font-size:8.6px;line-height:12px;font-style:italic;color:#222;white-space:nowrap;text-align:justify;text-align-last:justify">a few years ago this matter was addressed in a staff meeting but nothing was ever</div>
<div style="position:absolute;left:503.6px;width:335px;top:323.8px;font-size:8.6px;line-height:12px;font-style:italic;color:#222;white-space:nowrap;text-align:justify;text-align-last:justify">done about it. Students is unable to work in condition like this. There is no ventilation in</div>
<div style="position:absolute;left:503.6px;width:335px;top:338.8px;font-size:8.6px;line-height:12px;font-style:italic;color:#222;white-space:nowrap;text-align:justify;text-align-last:justify">the classroom and I am pretty sure that this problem is common amongst most of the</div>
<div style="position:absolute;left:503.6px;width:335px;top:353.8px;font-size:8.6px;line-height:12px;font-style:italic;color:#222;white-space:nowrap;text-align:justify;text-align-last:justify">staff members here. I have addressed this with management a number of times but I</div>
<div style="position:absolute;left:503.6px;width:335px;top:368.8px;font-size:8.6px;line-height:12px;font-style:italic;color:#222;white-space:nowrap;text-align:justify;text-align-last:justify">don't think they care, because nothing gets done about it. I don't blame students for</div>
<div style="position:absolute;left:503.6px;width:335px;top:383.8px;font-size:8.6px;line-height:12px;font-style:italic;color:#222;white-space:nowrap;text-align:left">complaining or wanting to cut classes short</div>
<div style="position:absolute;left:786.8px;top:174px;width:27px;height:26px;border-radius:50%;background:rgba(248,240,30,0.93)"></div>
<svg style="left:799.5px;top:187px" width="8" height="10"><path d="M1 1 V8 L2.8 6.5 L4.2 9 L5.3 8.5 L4 6 H6.5Z" fill="#fff" stroke="#555" stroke-width="0.5"/></svg>
<div style="position:absolute;left:1006.5px;top:113px;width:8px;height:391px;background:#f0f0f0"></div>
<div style="position:absolute;left:1006.5px;top:123px;width:8px;height:292px;background:#cdcdcd"></div>
<svg style="left:1007.5px;top:117px" width="6" height="4"><path d="M0.5 3.3 L3 0.8 L5.5 3.3" stroke="#555" stroke-width="1" fill="none"/></svg>
<div style="position:absolute;left:1015.8px;top:105px;width:1px;height:345px;background:#e2e2e2"></div>
<div style="position:absolute;left:1016.4px;top:110.3px;width:8px;height:30px;border:1px dotted #444;border-right:none"></div>
<div style="position:absolute;left:1016px;top:142.4px;width:8px;height:1px;background:#e0e0e0"></div>
<div style="position:absolute;left:1016px;top:176.8px;width:8px;height:1px;background:#e0e0e0"></div>
<div style="position:absolute;left:1016px;top:202.4px;width:8px;height:1px;background:#e0e0e0"></div>
<div style="position:absolute;left:1016px;top:233px;width:8px;height:1px;background:#e0e0e0"></div>
<div class="a" style="left:996.8px;top:122.0px;width:50px;height:7px;line-height:7px;font-size:6.2px;text-align:center;color:#3c3c3c;transform:rotate(90deg)">Summary</div>
<div class="a" style="left:996.8px;top:156.0px;width:50px;height:7px;line-height:7px;font-size:6.2px;text-align:center;color:#3c3c3c;transform:rotate(90deg)">Reference</div>
<div class="a" style="left:996.8px;top:186.0px;width:50px;height:7px;line-height:7px;font-size:6.2px;text-align:center;color:#3c3c3c;transform:rotate(90deg)">Survey</div>
<div class="a" style="left:996.8px;top:214.5px;width:50px;height:7px;line-height:7px;font-size:6.2px;text-align:center;color:#3c3c3c;transform:rotate(90deg)">Word Tree</div>
<div style="position:absolute;left:700px;top:504.5px;width:324px;height:7px;background:#d9d9d9"></div>
</body></html>
